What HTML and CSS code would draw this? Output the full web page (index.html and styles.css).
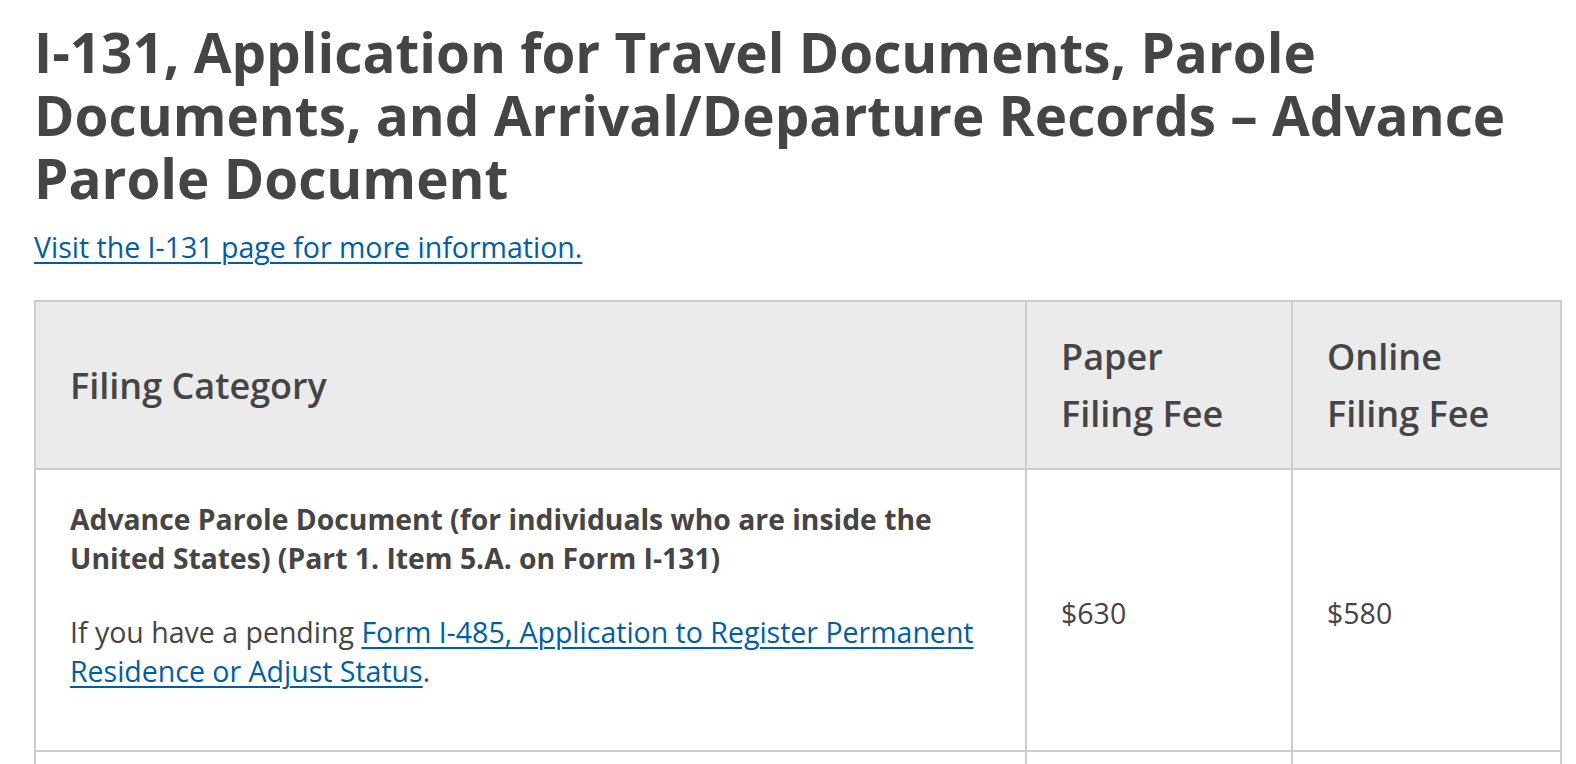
FILE: index.html
```html
<!DOCTYPE html>
<html lang="en">
<head>
<meta charset="utf-8">
<title>I-131 Fees</title>
<link rel="stylesheet" href="styles.css">
</head>
<body>
<main class="page">
  <h2 class="title">I-131, Application for Travel Documents, Parole Documents, and Arrival/Departure Records – Advance Parole Document</h2>
  <p class="more"><a href="#">Visit the I-131 page for more information.</a></p>
  <table class="fees">
    <colgroup>
      <col class="col-cat">
      <col class="col-fee">
      <col class="col-fee2">
    </colgroup>
    <thead>
      <tr>
        <th>Filing Category</th>
        <th>Paper Filing Fee</th>
        <th>Online Filing Fee</th>
      </tr>
    </thead>
    <tbody>
      <tr>
        <td>
          <p class="cat-name">Advance Parole Document (for individuals who are inside the United States) (Part 1. Item 5.A. on Form I-131)</p>
          <p>If you have a pending <a href="#">Form I-485, Application to Register Permanent Residence or Adjust Status</a>.</p>
        </td>
        <td>$630</td>
        <td>$580</td>
      </tr>
      <tr>
        <td>
          <p class="cat-name">Advance Parole Document (for individuals who are outside the United States)</p>
          <p>All other applicants.</p>
        </td>
        <td>$630</td>
        <td>$580</td>
      </tr>
    </tbody>
  </table>
</main>
</body>
</html>
```

FILE: styles.css
```css
html, body {
  margin: 0;
  padding: 0;
  background: #ffffff;
}

body {
  font-family: "Open Sans", "Lato", sans-serif;
  color: #454545;
}

.page {
  padding: 20px 16px 40px 34px;
}

.title {
  margin: 0;
  font-size: 54.8px;
  line-height: 63px;
  font-weight: 700;
  color: #454545;
}

.more {
  margin: 20px 0 35px 0;
  font-size: 28.5px;
  line-height: 36px;
}

a {
  color: #005ea2;
  text-decoration: underline;
  text-decoration-thickness: 2px;
  text-underline-offset: 4px;
}

.fees {
  width: 1526px;
  table-layout: fixed;
  border-collapse: collapse;
  font-size: 28.5px;
  line-height: 39px;
}

.col-cat { width: 991px; }
.col-fee { width: 266px; }
.col-fee2 { width: 269px; }

.fees th,
.fees td {
  border: 2px solid #cdcdcd;
  padding: 30px 34px 24px 34px;
  text-align: left;
  vertical-align: middle;
}

.fees th {
  background: #ebebeb;
  font-size: 36px;
  line-height: 57px;
  font-weight: 600;
  color: #454545;
  padding-top: 26px;
  padding-bottom: 26px;
}

.fees td p {
  margin: 0 0 35px 0;
}

.cat-name {
  font-weight: 700;
  font-size: 28.3px;
}
```
